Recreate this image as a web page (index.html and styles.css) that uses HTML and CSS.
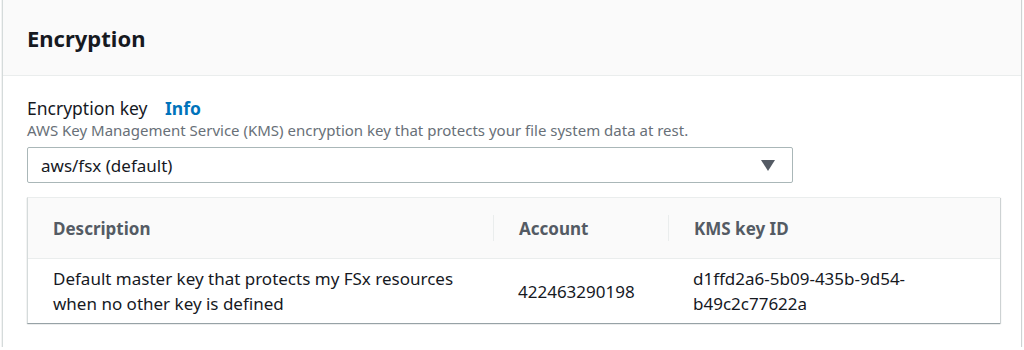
FILE: index.html
```html
<!DOCTYPE html>
<html lang="en">
<head>
    <meta charset="UTF-8">
    <meta name="viewport" content="width=device-width, initial-scale=1.0">
    <title>Encryption</title>
    <link rel="stylesheet" href="styles.css">
</head>
<body>

    <div class="panel">
        <div class="panel-header">
            <h2>Encryption</h2>
        </div>
        <div class="panel-body">
            <div class="field-label">
                <span>Encryption key</span>
                <a href="#" class="info-link">Info</a>
            </div>
            <p class="field-desc">AWS Key Management Service (KMS) encryption key that protects your file system data at rest.</p>
            <div class="select">
                <span>aws/fsx (default)</span>
                <svg class="caret" width="14" height="11" viewBox="0 0 14 11"><path d="M0 0h14L7 11z" fill="#545b64"/></svg>
            </div>

            <div class="key-table">
                <div class="row head">
                    <div class="cell">Description</div>
                    <div class="cell divided">Account</div>
                    <div class="cell divided">KMS key ID</div>
                </div>
                <div class="row">
                    <div class="cell">Default master key that protects my FSx resources when no other key is defined</div>
                    <div class="cell">422463290198</div>
                    <div class="cell">d1ffd2a6-5b09-435b-9d54-b49c2c77622a</div>
                </div>
            </div>
        </div>
    </div>

</body>
</html>
```

FILE: styles.css
```css
body {
    margin: 0;
    font-family: 'Noto Sans', 'Open Sans', sans-serif;
    background-color: #ffffff;
    color: #16191f;
}
.panel {
    margin: -1px 3px 0 2px;
    background-color: white;
    border-left: 1px solid #d5dbdb;
    box-shadow: 0 1px 1px 0 rgba(0, 28, 36, 0.3), 1px 1px 1px 0 rgba(0, 28, 36, 0.15);
}
.panel-header {
    height: 77px;
    box-sizing: border-box;
    padding: 0 24px;
    display: flex;
    align-items: center;
    background-color: #fafafa;
    border-bottom: 1px solid #eaeded;
}
.panel-header h2 {
    margin: 0;
    padding-top: 2px;
    font-size: 22px;
    font-weight: bold;
    color: #16191f;
}
.panel-body {
    padding: 20px 24px 24px;
}
.field-label {
    font-size: 17.5px;
    line-height: 24px;
}
.info-link {
    margin-left: 13px;
    color: #0073bb;
    font-weight: bold;
    text-decoration: none;
}
.field-desc {
    margin: 0;
    font-size: 15px;
    line-height: 20px;
    color: #687078;
}
.select {
    margin-top: 7px;
    width: 766px;
    height: 36px;
    box-sizing: border-box;
    padding: 0 17px 0 13px;
    display: flex;
    align-items: center;
    justify-content: space-between;
    border: 1px solid #aab7b8;
    border-radius: 2px;
    font-size: 17px;
}
.key-table {
    margin-top: 14px;
    width: 972px;
    border-top: 1px solid #eaeded;
    border-left: 1px solid #d5dbdb;
    box-shadow: 0 1px 1px 0 rgba(0, 28, 36, 0.3), 1px 1px 1px 0 rgba(0, 28, 36, 0.15);
}
.row {
    display: grid;
    grid-template-columns: 465px 175px 1fr;
    font-size: 17px;
    line-height: 25px;
}
.row.head {
    height: 60px;
    background-color: #fafafa;
    border-bottom: 1px solid #eaeded;
    font-weight: bold;
    color: #545b64;
}
.row .cell {
    padding: 0 25px;
    display: flex;
    align-items: center;
}
.row:not(.head) .cell {
    padding-top: 7px;
    padding-bottom: 7px;
}
.row.head .cell.divided {
    border-left: 1px solid #eaeded;
    margin: 17px 0;
}
.row.head .cell:first-child {
    margin: 17px 0;
}
```
